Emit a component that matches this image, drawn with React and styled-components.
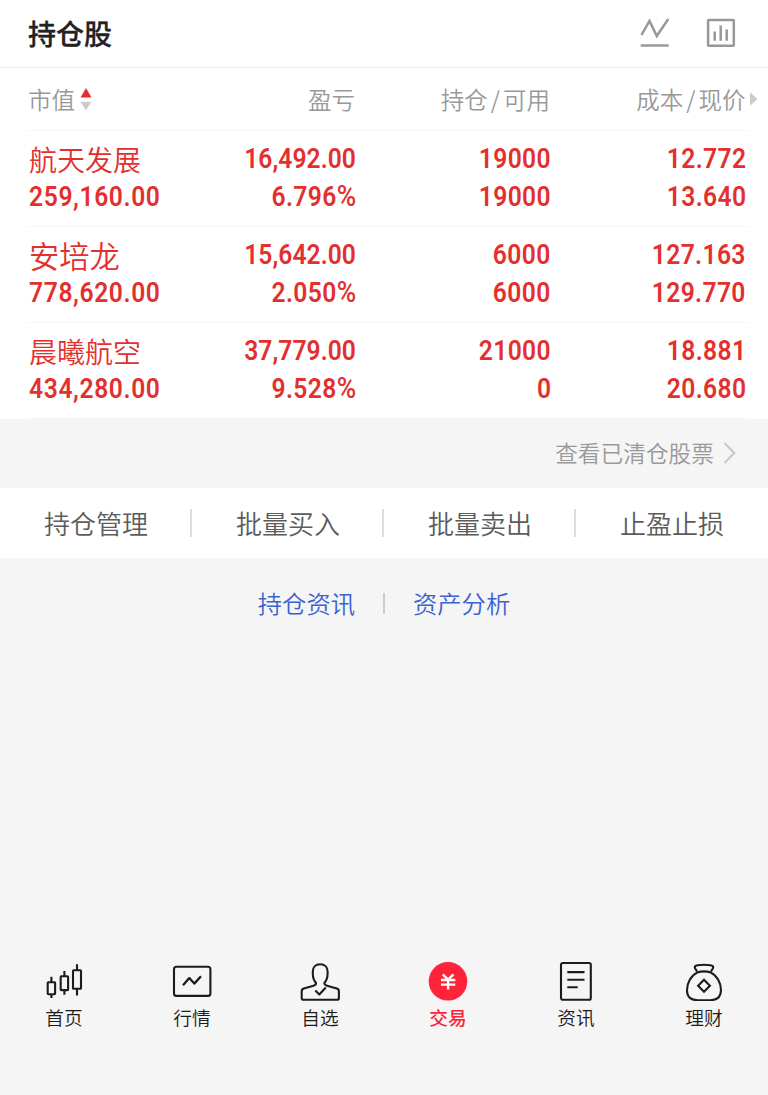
import React from "react";
import styled, { createGlobalStyle } from "styled-components";

const GlobalStyle = createGlobalStyle`
  * { box-sizing: border-box; }
  body {
    margin: 0;
    background: #f5f5f5;
    font-family: "Noto Sans CJK SC", sans-serif;
    font-weight: 350;
  }
`;

const Page = styled.div`
  display: flex;
  flex-direction: column;
  width: 768px;
  height: 1095px;
  background: #f5f5f5;
`;

const TitleBar = styled.header`
  display: flex;
  align-items: center;
  justify-content: space-between;
  height: 68px;
  padding: 0 32px 2px 28px;
  background: #fff;
  border-bottom: 1px solid #ececec;
`;

const Title = styled.h1`
  margin: 0;
  font-size: 28px;
  line-height: 40px;
  font-weight: 500;
  color: #222;
  -webkit-text-stroke: 0.3px #222;
`;

const TitleActions = styled.div`
  display: flex;
  gap: 36px;
`;

const Icon = styled.svg`
  display: block;
  flex: none;
  fill: none;
  stroke: ${(p) => p.$color || "#1c1c1c"};
  stroke-width: ${(p) => p.$weight || 2.1};
  stroke-linejoin: ${(p) => p.$join || "round"};
`;

const Holdings = styled.section`
  height: 351px;
  padding: 0 20px 0 28px;
  background: #fff;
`;

const columns = "133px 194px 195px 195px";

const HeaderRow = styled.div`
  display: grid;
  grid-template-columns: ${columns};
  align-items: center;
  height: 63px;
  padding-bottom: 1px;
  border-bottom: 1px solid #f5f5f5;
`;

const HeaderCell = styled.div`
  display: flex;
  align-items: center;
  justify-content: ${(p) => (p.$left ? "flex-start" : "flex-end")};
  gap: ${(p) => (p.$left ? "5px" : "4px")};
  margin-right: ${(p) => p.$outset || 0}px;
  font-size: 23.5px;
  line-height: 34px;
  color: #999;
  white-space: nowrap;
`;

const Slash = styled.span`
  margin: 0 3px;
`;

const HoldingRow = styled.div`
  display: grid;
  grid-template-columns: ${columns};
  height: 96px;
  padding-top: 9px;
  border-bottom: 1px solid #f5f5f5;
  color: #e3302f;
`;

const Cell = styled.div`
  display: flex;
  flex-direction: column;
  align-items: ${(p) => (p.$left ? "flex-start" : "flex-end")};
  padding-left: ${(p) => (p.$left ? 1 : 0)}px;
`;

const StockName = styled.span`
  font-size: ${(p) => p.$size}px;
  line-height: 38px;
  white-space: nowrap;
`;

const Figure = styled.span`
  margin-right: -1px;
  font-family: Roboto, sans-serif;
  font-size: 28px;
  font-weight: 600;
  line-height: 37.5px;
  letter-spacing: ${(p) => p.$spacing}px;
  white-space: nowrap;
  transform: scaleX(0.88);
  transform-origin: ${(p) => (p.$left ? "left" : "right")};
`;

const Percent = styled.span`
  font-weight: 500;
  font-size: 30px;
  line-height: 1;
`;

const ClearedLink = styled.div`
  display: flex;
  align-items: center;
  justify-content: flex-end;
  gap: 9px;
  height: 69px;
  padding: 0 32px 1px 0;
  font-size: 22.7px;
  line-height: 34px;
  color: #999;
`;

const Toolbar = styled.div`
  display: grid;
  grid-template-columns: repeat(4, 1fr);
  height: 70px;
  background: #fff;
`;

const ToolButton = styled.div`
  display: flex;
  align-items: center;
  justify-content: center;
  position: relative;
  padding-bottom: 2px;
  font-size: 26px;
  color: #5c5c5c;

  &:not(:last-child)::after {
    content: "";
    position: absolute;
    right: 0;
    top: 21px;
    width: 2px;
    height: 28px;
    background: #dcdcdc;
  }
`;

const Links = styled.div`
  display: flex;
  align-items: center;
  justify-content: center;
  gap: 28px;
  height: 91px;
`;

const BlueLink = styled.span`
  padding-bottom: 2px;
  font-size: 24.3px;
  line-height: 35px;
  color: #3b63cf;
`;

const LinkDivider = styled.i`
  width: 2px;
  height: 21px;
  background: #ccc;
`;

const TabBar = styled.nav`
  display: grid;
  grid-template-columns: repeat(6, 1fr);
  margin-top: auto;
  height: 134px;
`;

const Tab = styled.div`
  display: flex;
  flex-direction: column;
  align-items: center;
  gap: 3px;
  font-size: 18.7px;
  line-height: 26px;
  font-weight: ${(p) => (p.$active ? 500 : 350)};
  color: ${(p) => (p.$active ? "#fe2338" : "#1c1c1c")};
`;

const holdings = [
  { name: "航天发展", size: 28, value: "259,160.00", pl: ["16,492.00", "6.796%"], qty: ["19000", "19000"], price: ["12.772", "13.640"] },
  { name: "安培龙", size: 30.3, value: "778,620.00", pl: ["15,642.00", "2.050%"], qty: ["6000", "6000"], price: ["127.163", "129.770"] },
  { name: "晨曦航空", size: 28, value: "434,280.00", pl: ["37,779.00", "9.528%"], qty: ["21000", "0"], price: ["18.881", "20.680"] },
];

const tabs = [
  {
    label: "首页",
    art: (
      <>
        <rect x="3.7" y="21.3" width="7.4" height="11.9" rx="0.6" />
        <rect x="16.7" y="15.3" width="7.4" height="13.8" rx="0.6" />
        <rect x="29" y="9.3" width="8" height="18.5" rx="0.6" />
        <path d="M7.4 15.7v5.6M7.4 33.2V37M20.4 10v5.3M20.4 29v4.7M33 3.3v6M33 27.8v6.6" />
      </>
    ),
  },
  {
    label: "行情",
    art: (
      <>
        <rect x="2" y="5.7" width="36.4" height="29.2" rx="2.5" />
        <path d="M11 24.3l6.3-7.2 5 5.5 6.7-7.3" strokeWidth="2.3" />
      </>
    ),
  },
  {
    label: "自选",
    art: (
      <>
        <path d="M16 21.7C13.8 19.6 12.8 17 12.8 12.500V10.500C12.800 6 15.800 3.200 20.200 3.200S27.600 6 27.600 10.500V12.500C27.600 17 26.600 19.600 24.400 21.700C24.200 23.800 25 24.200 27 24.800L36.800 27.600C38.400 28.100 38.900 28.800 38.900 30.300V37C38.900 38.300 38.300 38.800 37 38.800H3.600C2.300 38.800 1.700 38.300 1.700 37V30.300C1.700 28.800 2.200 28.100 3.800 27.600L13.500 24.800C15.500 24.200 16.200 23.800 16 21.700Z" />
        <path d="M15.300 29.500l4 4 6.500-7" />
      </>
    ),
  },
  {
    label: "交易",
    active: true,
    art: (
      <>
        <circle cx="20" cy="20.300" r="19.300" fill="#fe2338" stroke="none" />
        <path d="M14.700 13.300l5.400 5.200 5.400-5.200M20.100 18.500v10M13 19h14.300M13 23.600h14.300" stroke="#fff" strokeWidth="2.400" />
      </>
    ),
  },
  {
    label: "资讯",
    art: (
      <>
        <rect x="5" y="2" width="29.800" height="36.800" rx="1.800" />
        <path d="M11.300 11.100h17.200M11.300 18.700h17.200M11.300 26.300h10.400" />
      </>
    ),
  },
  {
    label: "理财",
    art: (
      <>
        <path d="M13.200 10.600C12.300 9 11 7.800 10.800 6.300C10.700 4.800 12.100 4.400 13.500 4.200Q20 3.300 26.500 4.200C27.900 4.400 29.300 4.800 29.200 6.300C29 7.800 27.700 9 26.800 10.600" />
        <path d="M13.200 11.600Q20 9.200 26.800 11.600C33 14.500 37 22 37 29C37 36.500 33 39.200 26 39.200H14C7 39.200 3 36.500 3 29C3 22 7 14.500 13.200 11.600Z" />
        <path d="M20 18.700l5.900 6-5.900 6-5.900-6Z" strokeLinejoin="miter" />
      </>
    ),
  },
];

function Amount({ value }) {
  const percent = value.endsWith("%");
  return (
    <Figure $spacing={value.includes(",") ? 0.05 : 0.4}>
      {percent ? value.slice(0, -1) : value}
      {percent && <Percent>%</Percent>}
    </Figure>
  );
}

function Pair({ values }) {
  return (
    <Cell>
      {values.map((v, i) => (
        <Amount key={i} value={v} />
      ))}
    </Cell>
  );
}

export default function App() {
  return (
    <Page>
      <GlobalStyle />
      <TitleBar>
        <Title>持仓股</Title>
        <TitleActions>
          <Icon width="30" height="30" $color="#999" $weight={2.5} $join="miter">
            <path d="M1.500 17L9.500 3 16.800 18 28.300 1M0.700 27.500h28" />
          </Icon>
          <Icon width="30" height="30" $color="#999" $weight={2.5}>
            <rect x="2.100" y="2" width="25.700" height="25.700" rx="0.600" />
            <path d="M8.700 13.500v9.300M14.700 7.500v15.300M20.700 11.500v11.300" />
          </Icon>
        </TitleActions>
      </TitleBar>

      <Holdings>
        <HeaderRow>
          <HeaderCell $left>
            市值
            <Icon width="12" height="24" $color="none">
              <path d="M0.500 10.400h11L6 1Z" fill="#e3302f" />
              <path d="M0.500 14.700h11L6 23.500Z" fill="#ccc" />
            </Icon>
          </HeaderCell>
          <HeaderCell>盈亏</HeaderCell>
          <HeaderCell>
            <span>持仓<Slash>/</Slash>可用</span>
          </HeaderCell>
          <HeaderCell $outset={-12.5}>
            <span>成本<Slash>/</Slash>现价</span>
            <Icon width="8" height="14" $color="none">
              <path d="M0 0.300v13.400L7.500 7Z" fill="#ccc" />
            </Icon>
          </HeaderCell>
        </HeaderRow>
        {holdings.map((h) => (
          <HoldingRow key={h.name}>
            <Cell $left>
              <StockName $size={h.size}>{h.name}</StockName>
              <Figure $left $spacing={0.7}>{h.value}</Figure>
            </Cell>
            <Pair values={h.pl} />
            <Pair values={h.qty} />
            <Pair values={h.price} />
          </HoldingRow>
        ))}
      </Holdings>

      <ClearedLink>
        查看已清仓股票
        <Icon width="13" height="22" $color="#c8c8c8" $join="miter">
          <path d="M1.500 1L11.300 11 1.500 21" />
        </Icon>
      </ClearedLink>

      <Toolbar>
        {["持仓管理", "批量买入", "批量卖出", "止盈止损"].map((t) => (
          <ToolButton key={t}>{t}</ToolButton>
        ))}
      </Toolbar>

      <Links>
        <BlueLink>持仓资讯</BlueLink>
        <LinkDivider />
        <BlueLink>资产分析</BlueLink>
      </Links>

      <TabBar>
        {tabs.map((t) => (
          <Tab key={t.label} $active={t.active}>
            <Icon width="40" height="40">{t.art}</Icon>
            {t.label}
          </Tab>
        ))}
      </TabBar>
    </Page>
  );
}
